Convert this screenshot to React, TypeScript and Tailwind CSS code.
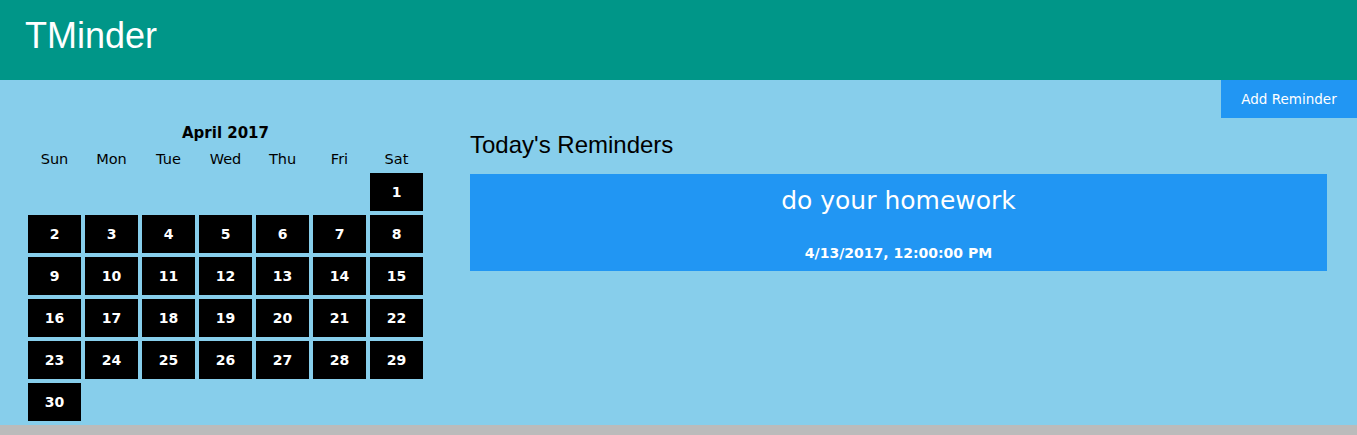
import React from "react";

type Reminder = {
  text: string;
  time: string;
};

const dayNames = ["Sun", "Mon", "Tue", "Wed", "Thu", "Fri", "Sat"];

const reminders: Reminder[] = [
  { text: "do your homework", time: "4/13/2017, 12:00:00 PM" },
];

// April 2017 starts on a Saturday
const firstWeekday = 6;
const daysInMonth = 30;

function Calendar() {
  const cells: (number | null)[] = [];
  for (let i = 0; i < firstWeekday; i++) cells.push(null);
  for (let d = 1; d <= daysInMonth; d++) cells.push(d);

  return (
    <div className="w-[395px] font-['DejaVu_Sans',sans-serif] text-black">
      {/* CAPTION */}
      <div className="mt-[6px] h-[18px] text-center text-[15px] font-bold leading-[18px]">
        April 2017
      </div>

      {/* WEEKDAYS */}
      <div className="mt-[8px] grid grid-cols-[repeat(7,53px)] gap-x-[4px]">
        {dayNames.map((name) => (
          <div
            key={name}
            className="h-[18px] text-center text-[14.5px] leading-[18px]"
          >
            {name}
          </div>
        ))}
      </div>

      {/* DAYS */}
      <div className="mt-[5px] grid grid-cols-[repeat(7,53px)] auto-rows-[38px] gap-[4px]">
        {cells.map((day, index) =>
          day === null ? (
            <div key={index} />
          ) : (
            <div
              key={index}
              className="flex items-center justify-center bg-black text-[14px] font-bold text-white"
            >
              {day}
            </div>
          )
        )}
      </div>
    </div>
  );
}

export default function App() {
  return (
    <div className="min-h-screen bg-[#bbbbbb]">
      {/* HEADER */}
      <header className="h-[80px] bg-[#009688] px-[25px] pt-[15px]">
        <h1 className="font-['Liberation_Sans',Arial,sans-serif] text-[36px] leading-[41px] text-white">
          TMinder
        </h1>
      </header>

      <main className="bg-[#87CEEB] pb-[4px]">
        {/* TOOLBAR */}
        <div className="flex justify-end">
          <button className="flex h-[38px] w-[136px] items-center justify-center bg-[#2196F3] font-['DejaVu_Sans',sans-serif] text-[13.5px] text-white">
            Add Reminder
          </button>
        </div>

        <div className="flex">
          <div className="pl-[28px]">
            <Calendar />
          </div>

          {/* REMINDERS */}
          <div className="ml-[47px] mr-[30px] flex-1">
            <h2 className="mt-[13px] font-['Liberation_Sans',Arial,sans-serif] text-[24px] leading-[28px] text-black">
              Today's Reminders
            </h2>

            <div className="mt-[15px] flex flex-col gap-[10px]">
              {reminders.map((reminder, index) => (
                <div
                  key={index}
                  className="bg-[#2196F3] pt-[12px] pb-[10px] text-center font-['DejaVu_Sans',sans-serif] text-white"
                >
                  <div className="text-[25px] leading-[29px]">
                    {reminder.text}
                  </div>
                  <div className="mt-[30px] text-[14px] font-bold leading-[16px]">
                    {reminder.time}
                  </div>
                </div>
              ))}
            </div>
          </div>
        </div>
      </main>
    </div>
  );
}
